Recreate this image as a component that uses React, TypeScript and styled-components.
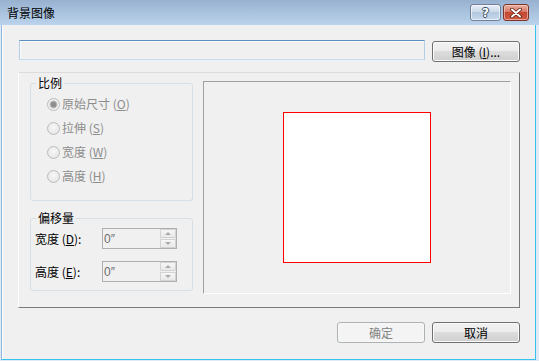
import React from "react";
import styled, { createGlobalStyle } from "styled-components";

const Global = createGlobalStyle`
  html, body { margin: 0; padding: 0; background: #f0f0f0; }
  body { font-family: "Noto Sans CJK SC", "Noto Sans", sans-serif; font-size: 12px; }
  * { box-sizing: border-box; }
`;

const Window = styled.div`
  width: 539px;
  height: 361px;
  display: flex;
  flex-direction: column;
  background: #dfeaf6;
  overflow: hidden;
`;

const TitleBar = styled.div`
  height: 25px;
  flex: none;
  display: flex;
  align-items: flex-start;
  padding: 0 10px 0 7px;
  background: linear-gradient(#97b1cf, #bbd3ec);
`;

const Title = styled.div`
  flex: 1;
  margin-top: 5px;
  font-size: 12px;
  line-height: 16px;
  color: #000;
`;

const CaptionButtons = styled.div`
  display: flex;
  gap: 2px;
  margin-top: 4px;
`;

const CaptionButton = styled.div<{ $close?: boolean }>`
  width: ${(p) => (p.$close ? 26 : 31)}px;
  height: 17px;
  border-radius: 3px;
  border: 1px solid ${(p) => (p.$close ? "#7c3528" : "#6f8098")};
  box-shadow: inset 0 0 0 1px ${(p) => (p.$close ? "rgba(255,220,210,0.55)" : "rgba(255,255,255,0.6)")};
  display: flex;
  align-items: center;
  justify-content: center;
  background: ${(p) =>
    p.$close
      ? "linear-gradient(#eab0a2, #d77a66 45%, #c4472f 50%, #cf5c45)"
      : "linear-gradient(#e7eef7, #cbd9ea 45%, #b4c8e0 50%, #c6d8ed)"};
`;

const HelpGlyph = styled.span`
  font-family: "DejaVu Sans", sans-serif;
  font-weight: bold;
  font-size: 12px;
  line-height: 12px;
  color: #ffffff;
  text-shadow: 1px 0 0 #3b4a60, -1px 0 0 #3b4a60, 0 1px 0 #3b4a60, 0 -1px 0 #3b4a60;
`;

const Body = styled.div`
  flex: 1;
  min-height: 0;
  display: flex;
  padding: 0 3px 1px 1px;
`;

const Client = styled.div`
  flex: 1;
  display: flex;
  flex-direction: column;
  background: #f0f0f0;
  border-left: 1px solid #8fb6dd;
  border-right: 1px solid #36c2ee;
  border-bottom: 1px solid #36c2ee;
  box-shadow: inset 1px 0 0 #fbfdff;
  padding: 15px 15px 0 16px;
`;

const TopRow = styled.div`
  display: flex;
  align-items: flex-start;
  gap: 7px;
  padding-left: 1px;
`;

const PathField = styled.div`
  flex: 1;
  height: 20px;
  background: #f0f0f0;
  border-style: solid;
  border-width: 1px;
  border-color: #5d8fc0 #b3cfe8 #c6ddf0 #b3cfe8;
  box-shadow: inset 1px 1px 0 #f8fbfd;
`;

const PushButton = styled.div<{ $disabled?: boolean; $top?: number }>`
  width: 88px;
  height: 21px;
  margin-top: ${(p) => p.$top ?? 0}px;
  border-radius: 3px;
  border: 1px solid ${(p) => (p.$disabled ? "#adb2b5" : "#707070")};
  box-shadow: inset 0 0 0 1px ${(p) => (p.$disabled ? "#f7f7f7" : "#fbfbfb")};
  background: ${(p) =>
    p.$disabled
      ? "#f4f4f4"
      : "linear-gradient(#f2f2f2 0%, #ebebeb 50%, #dddddd 50%, #cfcfcf 100%)"};
  color: ${(p) => (p.$disabled ? "#838383" : "#000")};
  display: flex;
  align-items: center;
  justify-content: center;
  font-size: 12px;
  line-height: 14px;
  white-space: pre;
`;

const Key = styled.span`
  text-decoration: underline;
`;

const MainFrame = styled.div`
  margin-top: 10px;
  height: 236px;
  display: flex;
  align-items: flex-start;
  gap: 10px;
  padding: 3px 8px 0 11px;
  border-style: solid;
  border-width: 1px;
  border-color: #dcdcdc #7a7a7a #7a7a7a #fdfdfd;
`;

const LeftColumn = styled.div`
  width: 163px;
  display: flex;
  flex-direction: column;
  gap: 10px;
`;

const Group = styled.fieldset<{ $h: number }>`
  margin: 0;
  padding: 0;
  height: ${(p) => p.$h}px;
  border: 1px solid #d5dfe5;
  border-radius: 3px;
  min-width: 0;
`;

const Legend = styled.legend`
  margin-left: 5px;
  padding: 0 2px;
  font-size: 12px;
  line-height: 14px;
  color: #000;
`;

const RadioList = styled.div`
  padding: 2px 0 0 16px;
  display: flex;
  flex-direction: column;
`;

const RadioRow = styled.div`
  height: 24px;
  display: flex;
  align-items: center;
  gap: 2px;
  color: #8d8d8d;
  font-size: 12px;
  line-height: 14px;
  white-space: pre;
`;

const RadioDot = styled.span<{ $checked?: boolean }>`
  width: 13px;
  height: 13px;
  flex: none;
  border-radius: 50%;
  border: 1px solid #bcbcbc;
  background: ${(p) =>
    p.$checked
      ? "radial-gradient(circle, #8e8e8e 0 2.6px, #bdbdbd 3.2px 3.8px, #f2f2f2 4.3px)"
      : "radial-gradient(circle at 50% 40%, #f7f7f7, #e2e2e2)"};
`;

const OffsetList = styled.div`
  padding: 3px 0 0 4px;
  display: flex;
  flex-direction: column;
  gap: 12px;
`;

const OffsetRow = styled.div`
  height: 21px;
  display: flex;
  align-items: center;
`;

const OffsetLabel = styled.div`
  width: 67px;
  font-size: 12px;
  line-height: 14px;
  color: #000;
  white-space: pre;
`;

const SpinField = styled.div`
  width: 75px;
  height: 21px;
  display: flex;
  align-items: stretch;
  border: 1px solid #afafaf;
  background: #f0f0f0;
`;

const SpinValue = styled.div`
  flex: 1;
  padding: 3px 0 0 1px;
  color: #6d6d6d;
  font-family: "Liberation Sans", sans-serif;
  font-size: 12px;
  line-height: 14px;
`;

const SpinButtons = styled.div`
  width: 16px;
  display: flex;
  flex-direction: column;
  gap: 1px;
  padding: 0 0 0 0;
`;

const SpinButton = styled.div<{ $down?: boolean }>`
  flex: 1;
  border: 1px solid #d3d3d3;
  background: linear-gradient(#f6f6f6, #e9e9e9);
  display: flex;
  align-items: center;
  justify-content: center;
  &::after {
    content: "";
    width: 0;
    height: 0;
    border-left: 3px solid transparent;
    border-right: 3px solid transparent;
    ${(p) =>
      p.$down ? "border-top: 3px solid #a9a9a9;" : "border-bottom: 3px solid #a9a9a9;"}
  }
`;

const Preview = styled.div`
  margin-top: 5px;
  width: 308px;
  height: 213px;
  display: flex;
  align-items: center;
  justify-content: center;
  border-style: solid;
  border-width: 1px;
  border-color: #a0a0a0 #ffffff #ffffff #a0a0a0;
`;

const Page = styled.div`
  width: 148px;
  height: 151px;
  background: #ffffff;
  border: 1px solid #ff0000;
`;

const BottomRow = styled.div`
  margin-top: 14px;
  display: flex;
  justify-content: flex-end;
  gap: 7px;
`;

const radios = [
  { text: "原始尺寸 ", key: "O", checked: true },
  { text: "拉伸 ", key: "S" },
  { text: "宽度 ", key: "W" },
  { text: "高度 ", key: "H" },
];

export default function App() {
  return (
    <>
      <Global />
      <Window>
        <TitleBar>
          <Title>背景图像</Title>
          <CaptionButtons>
            <CaptionButton>
              <HelpGlyph>?</HelpGlyph>
            </CaptionButton>
            <CaptionButton $close>
              <svg width="12" height="10" viewBox="0 0 12 10">
                <path d="M2 1.5 L10 8.5 M10 1.5 L2 8.5" stroke="#5a1d12" strokeWidth="3.6" strokeLinecap="round" />
                <path d="M2 1.5 L10 8.5 M10 1.5 L2 8.5" stroke="#ffffff" strokeWidth="2" strokeLinecap="round" />
              </svg>
            </CaptionButton>
          </CaptionButtons>
        </TitleBar>
        <Body>
          <Client>
            <TopRow>
              <PathField />
              <PushButton $top={1}>
                图像 (<Key>I</Key>)...
              </PushButton>
            </TopRow>
            <MainFrame>
              <LeftColumn>
                <Group $h={125}>
                  <Legend>比例</Legend>
                  <RadioList>
                    {radios.map((r) => (
                      <RadioRow key={r.key}>
                        <RadioDot $checked={r.checked} />
                        <span>
                          {r.text}(<Key>{r.key}</Key>)
                        </span>
                      </RadioRow>
                    ))}
                  </RadioList>
                </Group>
                <Group $h={80}>
                  <Legend>偏移量</Legend>
                  <OffsetList>
                    <OffsetRow>
                      <OffsetLabel>
                        宽度 (<Key>D</Key>):
                      </OffsetLabel>
                      <SpinField>
                        <SpinValue>0″</SpinValue>
                        <SpinButtons>
                          <SpinButton />
                          <SpinButton $down />
                        </SpinButtons>
                      </SpinField>
                    </OffsetRow>
                    <OffsetRow>
                      <OffsetLabel>
                        高度 (<Key>E</Key>):
                      </OffsetLabel>
                      <SpinField>
                        <SpinValue>0″</SpinValue>
                        <SpinButtons>
                          <SpinButton />
                          <SpinButton $down />
                        </SpinButtons>
                      </SpinField>
                    </OffsetRow>
                  </OffsetList>
                </Group>
              </LeftColumn>
              <Preview>
                <Page />
              </Preview>
            </MainFrame>
            <BottomRow>
              <PushButton $disabled>确定</PushButton>
              <PushButton>取消</PushButton>
            </BottomRow>
          </Client>
        </Body>
      </Window>
    </>
  );
}
